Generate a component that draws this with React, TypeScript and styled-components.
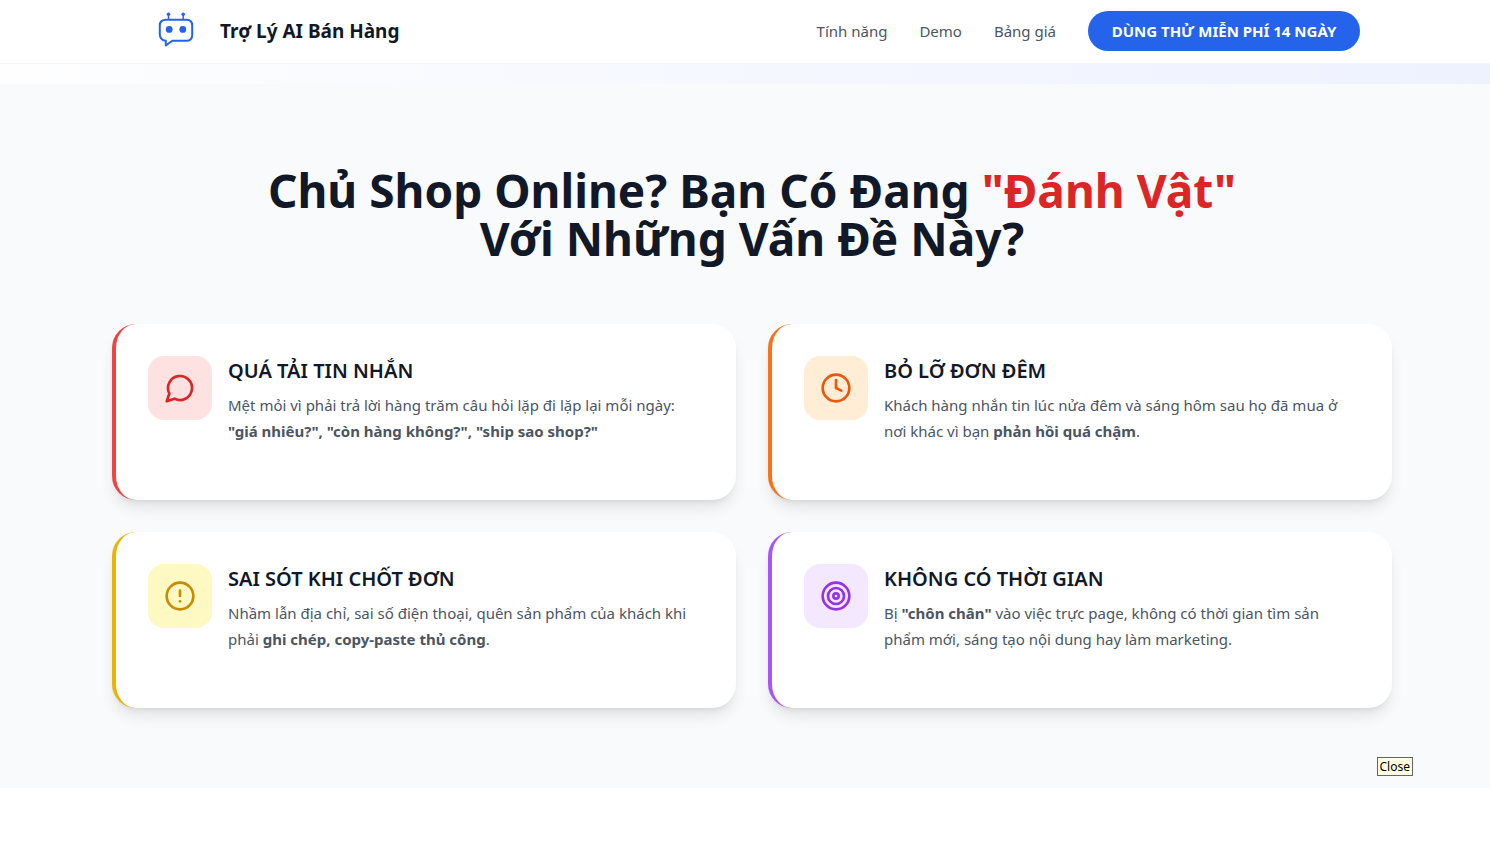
import React from "react";
import styled, { createGlobalStyle } from "styled-components";
import { CircleAlert, Clock, Target } from "lucide-react";

const GlobalStyle = createGlobalStyle`
  *, *::before, *::after { box-sizing: border-box; }
  body {
    margin: 0;
    background: #fff;
    color: #111827;
    font-family: "Segoe UI", "Noto Sans", "Open Sans", sans-serif;
    font-size: 15px;
    line-height: 24px;
  }
  h1, h2, h3, p { margin: 0; }
`;

const Page = styled.div`
  position: relative;
  min-height: 100vh;
`;

const Header = styled.header`
  height: 64px;
  padding-left: 14px;
  background: #fff;
  border-bottom: 1px solid #f3f4f6;
`;

const Container = styled.div`
  max-width: 1280px;
  margin: 0 auto;
`;

const HeaderBar = styled(Container)`
  display: flex;
  align-items: center;
  justify-content: space-between;
  height: 62px;
  padding: 0 32px;
`;

const Brand = styled.a`
  display: flex;
  align-items: center;
  gap: 12px;
  color: #111827;
  font-size: 19px;
  font-weight: 700;
  line-height: 26px;
  text-decoration: none;
`;

const Logo = styled.svg`
  width: 64px;
  height: 62px;
`;

const Nav = styled.nav`
  display: flex;
  align-items: center;
  gap: 32px;
`;

const NavLink = styled.a`
  color: #4b5563;
  text-decoration: none;
`;

const TrialButton = styled.button`
  min-width: 272px;
  height: 40px;
  padding: 0 20px;
  border: 0;
  border-radius: 20px;
  background: #2563eb;
  color: #fff;
  font: inherit;
  font-weight: 700;
  white-space: nowrap;
  cursor: pointer;
`;

const HeroEdge = styled.div`
  height: 20px;
  background: linear-gradient(to right, #fefeff, #f8faff 30%, #eef2ff);
`;

const Problems = styled.section`
  padding: 82px 0 80px 14px;
  background: #f9fafb;
`;

const Heading = styled.h2`
  margin-bottom: 62px;
  font-size: 46px;
  font-weight: 700;
  line-height: 48px;
  text-align: center;
`;

const Highlight = styled.span`
  color: #dc2626;
`;

const CardGrid = styled.div`
  display: grid;
  grid-template-columns: repeat(2, 1fr);
  gap: 32px;
`;

const Card = styled.article<{ $accent: string }>`
  display: flex;
  align-items: flex-start;
  gap: 16px;
  min-height: 176px;
  padding: 32px;
  border-left: 4px solid ${(p) => p.$accent};
  border-radius: 24px;
  background: #fff;
  box-shadow: 0 10px 15px -3px rgba(0, 0, 0, 0.1), 0 4px 6px -4px rgba(0, 0, 0, 0.1);
`;

const IconTile = styled.div<{ $ink: string; $tint: string }>`
  display: flex;
  flex: none;
  align-items: center;
  justify-content: center;
  width: 64px;
  height: 64px;
  border-radius: 16px;
  background: ${(p) => p.$tint};
  color: ${(p) => p.$ink};
`;

const CardTitle = styled.h3`
  margin-bottom: 6px;
  font-size: 20px;
  font-weight: 600;
  line-height: 30px;
`;

const CardText = styled.p`
  color: #4b5563;
  line-height: 26px;
`;

const Tooltip = styled.div`
  position: absolute;
  top: 757px;
  right: 77px;
  padding: 0 2px;
  border: 1px solid #646464;
  background: #ffffe1;
  color: #000;
  font-size: 12px;
  line-height: 17px;
`;

function RobotLogo() {
  return (
    <Logo viewBox="0 0 64 62" fill="none" stroke="#2563eb" strokeWidth="2" aria-hidden="true">
      <path d="M24.5 14.3V19M39.2 14.3V19" strokeWidth="1.5" />
      <path
        d="M22 19.8H42.5Q48.2 19.8 48.2 25.5V34.7Q48.2 40.8 42.5 40.8H28.3L21.8 45.5V40.8Q15.8 40 15.8 34.2V25.5Q15.8 19.8 22 19.8Z"
        strokeLinejoin="round"
      />
      <g fill="#2563eb" stroke="none">
        <circle cx="24.5" cy="14.3" r="1.8" />
        <circle cx="39.2" cy="14.3" r="1.8" />
        <circle cx="25.2" cy="29.4" r="3.4" />
        <circle cx="38.8" cy="29.4" r="3.4" />
      </g>
    </Logo>
  );
}

/* Round speech bubble with a pointed tail at the lower left. */
function MessageBubble({ size }: { size: number }) {
  return (
    <svg
      width={size}
      height={size}
      viewBox="0 0 24 24"
      fill="none"
      stroke="currentColor"
      strokeWidth="2"
      strokeLinecap="round"
      strokeLinejoin="round"
      aria-hidden="true"
    >
      <path d="M7.9 20A9 9 0 1 0 4 16.1L2 22Z" />
    </svg>
  );
}

interface Problem {
  title: string;
  text: React.ReactNode;
  icon: React.ComponentType<{ size: number }>;
  accent: string;
  ink: string;
  tint: string;
}

const problems: Problem[] = [
  {
    title: "QUÁ TẢI TIN NHẮN",
    text: (
      <>
        Mệt mỏi vì phải trả lời hàng trăm câu hỏi lặp đi lặp lại mỗi ngày:{" "}
        <strong>"giá nhiêu?", "còn hàng không?", "ship sao shop?"</strong>
      </>
    ),
    icon: MessageBubble,
    accent: "#ef4444",
    ink: "#dc2626",
    tint: "#fee2e2",
  },
  {
    title: "BỎ LỠ ĐƠN ĐÊM",
    text: (
      <>
        Khách hàng nhắn tin lúc nửa đêm và sáng hôm sau họ đã mua ở nơi khác vì bạn{" "}
        <strong>phản hồi quá chậm</strong>.
      </>
    ),
    icon: Clock,
    accent: "#f97316",
    ink: "#ea580c",
    tint: "#ffedd5",
  },
  {
    title: "SAI SÓT KHI CHỐT ĐƠN",
    text: (
      <>
        Nhầm lẫn địa chỉ, sai số điện thoại, quên sản phẩm của khách khi phải{" "}
        <strong>ghi chép, copy-paste thủ công</strong>.
      </>
    ),
    icon: CircleAlert,
    accent: "#eab308",
    ink: "#ca8a04",
    tint: "#fef9c3",
  },
  {
    title: "KHÔNG CÓ THỜI GIAN",
    text: (
      <>
        Bị <strong>"chôn chân"</strong> vào việc trực page, không có thời gian tìm sản phẩm mới,
        sáng tạo nội dung hay làm marketing.
      </>
    ),
    icon: Target,
    accent: "#a855f7",
    ink: "#9333ea",
    tint: "#f3e8ff",
  },
];

export default function App() {
  return (
    <Page>
      <GlobalStyle />
      <Header>
        <HeaderBar>
          <Brand href="#">
            <RobotLogo />
            Trợ Lý AI Bán Hàng
          </Brand>
          <Nav>
            <NavLink href="#features">Tính năng</NavLink>
            <NavLink href="#demo">Demo</NavLink>
            <NavLink href="#pricing">Bảng giá</NavLink>
            <TrialButton type="button">DÙNG THỬ MIỄN PHÍ 14 NGÀY</TrialButton>
          </Nav>
        </HeaderBar>
      </Header>
      <main>
        <HeroEdge />
        <Problems>
          <Container>
            <Heading>
              Chủ Shop Online? Bạn Có Đang <Highlight>"Đánh Vật"</Highlight>
              <br />
              Với Những Vấn Đề Này?
            </Heading>
            <CardGrid>
              {problems.map(({ title, text, icon: Icon, accent, ink, tint }) => (
                <Card key={title} $accent={accent}>
                  <IconTile $ink={ink} $tint={tint}>
                    <Icon size={32} />
                  </IconTile>
                  <div>
                    <CardTitle>{title}</CardTitle>
                    <CardText>{text}</CardText>
                  </div>
                </Card>
              ))}
            </CardGrid>
          </Container>
        </Problems>
      </main>
      <Tooltip role="tooltip">Close</Tooltip>
    </Page>
  );
}
